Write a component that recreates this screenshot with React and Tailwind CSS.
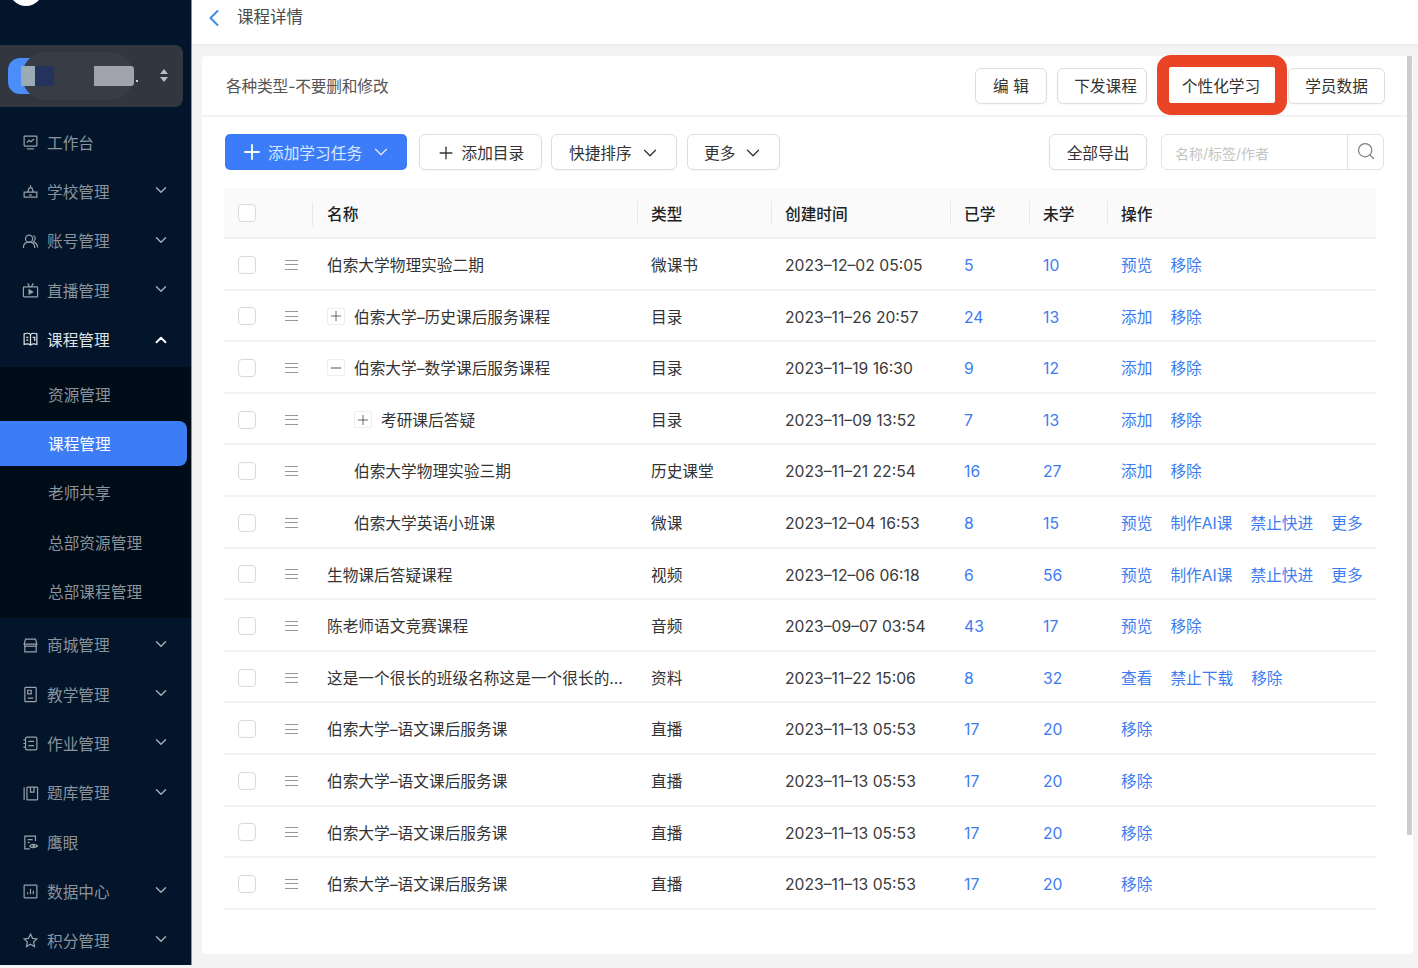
import { ChevronDown, ChevronUp, ChevronLeft, Plus, Minus, Search } from "lucide-react";

// sidebar icons, drawn by hand from the screenshot
const icons = {
  desk: <><rect x="3" y="3" width="18" height="14" rx="1" /><path d="M7 12l3-3 2.500 2L17 7" /><path d="M7 21h10" /></>,
  school: <><path d="M12 3v3" /><path d="M8 13l2-6h4l2 6" /><path d="M3 20v-7h18v7z" /><path d="M10 17h4" /></>,
  user: <><circle cx="10" cy="8" r="5" /><path d="M2 21c0-5 3-8 8-8s8 3 8 8" /><path d="M16 3.500c3 1 4 6 0 9 3 1 6 4 6 8" /></>,
  live: <><rect x="2" y="7" width="20" height="14" rx="1" /><path d="M8 2l3 5M16 2l-3 5" /><path d="M10 11l5 3-5 3z" fill="currentColor" /></>,
  course: <><path d="M12 5c-2-2-6-2-9-1v15c3-1 7-1 9 1 2-2 6-2 9-1V4c-3-1-7-1-9 1z" /><path d="M12 5v15" /><path d="M6 9h3M6 13h3" /><path d="M15 9h3v5" /></>,
  shop: <><path d="M5 3h14l2 7H3z" /><path d="M4 10v11h16V10" /><path d="M3 13h18" /></>,
  teach: <><rect x="4" y="2" width="16" height="20" rx="1" /><path d="M8 6h5v5H8zM8 17h8" /></>,
  work: <><rect x="5" y="3" width="16" height="18" rx="2" /><path d="M9 9h8M9 15h8M2 7h3M2 12h3M2 17h3" /></>,
  bank: <><path d="M3 3v18" /><rect x="7" y="3" width="15" height="18" rx="1" /><path d="M12 3v7h5V3" /></>,
  eye: <><path d="M11 21H4V3h15v7" /><path d="M8 8h7M8 12h3" /><path d="M11 17c2-3 8-3 11 0-3 3-9 3-11 0z" /><circle cx="16.500" cy="17" r="1" /></>,
  data: <><rect x="3" y="3" width="18" height="18" rx="1" /><path d="M8 16v-3M12 16V8M16 16v-5" /></>,
  star: <path d="M12 3l2.800 6 6.200.7-4.600 4.300 1.300 6.500L12 17.200 6.300 20.500l1.300-6.500L3 9.700 9.200 9z" />,
};

function MenuIcon({ name }) {
  return (
    <svg viewBox="0 0 24 24" fill="none" stroke="currentColor" strokeWidth="1.700" className="w-[17px] h-[17px] shrink-0">
      {icons[name]}
    </svg>
  );
}

function MenuRow({ icon, label, arrow, open }) {
  return (
    <div className={`h-[49.3px] flex items-center pl-[21.500px] pr-[21px] ${open ? "text-[#dfe3e7]" : "text-[#9aa1aa]"}`}>
      <MenuIcon name={icon} />
      <span className={`ml-[8.500px] flex-1 pt-[2px] ${open ? "text-[#dfe3e7]" : "text-[#8b939d]"}`}>{label}</span>
      {arrow && (open ? <ChevronUp size={18} strokeWidth={2.400} className="text-white" /> : <ChevronDown size={18} strokeWidth={2} className="text-[#a4abb3] -mt-[3px]" />)}
    </div>
  );
}

function Sidebar() {
  const top = [
    { icon: "desk", label: "工作台" },
    { icon: "school", label: "学校管理", arrow: true },
    { icon: "user", label: "账号管理", arrow: true },
    { icon: "live", label: "直播管理", arrow: true },
    { icon: "course", label: "课程管理", arrow: true, open: true },
  ];
  const sub = ["资源管理", "课程管理", "老师共享", "总部资源管理", "总部课程管理"];
  const bottom = [
    { icon: "shop", label: "商城管理", arrow: true },
    { icon: "teach", label: "教学管理", arrow: true },
    { icon: "work", label: "作业管理", arrow: true },
    { icon: "bank", label: "题库管理", arrow: true },
    { icon: "eye", label: "鹰眼" },
    { icon: "data", label: "数据中心", arrow: true },
    { icon: "star", label: "积分管理", arrow: true },
  ];
  return (
    <div className="w-[192px] h-[965px] shrink-0 bg-[#02152a] border-r border-[#8d939a] overflow-hidden">
      <div className="h-[45px] pl-[9px] overflow-hidden">
        <div className="w-[34px] h-[34px] -mt-[28px] rounded-full bg-white"></div>
      </div>
      <div className="relative h-[62px] w-[183px] rounded-r-[8px] bg-[#31363f] mb-[11px] flex items-center pl-[8px]">
        <div className="w-[40px] h-[36px] rounded-l-[12px] bg-[#4b8dfb]"></div>
        <div className="absolute left-[22px] top-[7px] w-[112px] h-[48px] rounded-full bg-[#383c44]"></div>
        <div className="absolute left-[21px] top-[21px] w-[14px] h-[20px] bg-[#9aabb4]"></div>
        <div className="absolute left-[35px] top-[21px] w-[19px] h-[20px] bg-[#24345f]"></div>
        <div className="absolute left-[94px] top-[21px] w-[40px] h-[20px] rounded-r-[3px] bg-[#a0a3ad]"></div>
        <div className="absolute left-[136px] top-[35px] w-[2px] h-[2px] bg-[#c8ccd2]"></div>
        <div className="absolute left-[160px] top-[24px] flex flex-col gap-[3px]">
          <div className="w-0 h-0 border-x-[4px] border-x-transparent border-b-[5px] border-b-[#b9bdc3]"></div>
          <div className="w-0 h-0 border-x-[4px] border-x-transparent border-t-[5px] border-t-[#b9bdc3]"></div>
        </div>
      </div>
      {top.map((m) => <MenuRow key={m.label} {...m} />)}
      <div className="bg-[#000c17] h-[251px] mt-[2.500px] mb-[2.500px] pt-[3px]">
        {sub.map((s) => (
          <div key={s} className="relative h-[49.3px] flex items-center pl-[48px] text-[#8b939d]">
            {s === "课程管理" && <div className="absolute left-0 top-[2px] w-[187px] h-[45px] rounded-r-[8px] bg-[#3c7df6]"></div>}
            <span className={`relative pt-[2px] ${s === "课程管理" ? "text-white" : ""}`}>{s}</span>
          </div>
        ))}
      </div>
      {bottom.map((m) => <MenuRow key={m.label} {...m} />)}
    </div>
  );
}

function Btn({ children, className = "" }) {
  return (
    <button className={`h-[36px] pt-[3px] rounded-[6px] border border-[#dedede] bg-white text-[#333] flex items-center shadow-[0_1px_2px_rgba(0,0,0,0.04)] ${className}`}>
      {children}
    </button>
  );
}

const rows = [
  { name: "伯索大学物理实验二期", type: "微课书", time: "2023–12–02 05:05", a: 5, b: 10, ops: ["预览", "移除"] },
  { name: "伯索大学–历史课后服务课程", exp: "plus", type: "目录", time: "2023–11–26 20:57", a: 24, b: 13, ops: ["添加", "移除"] },
  { name: "伯索大学–数学课后服务课程", exp: "minus", type: "目录", time: "2023–11–19 16:30", a: 9, b: 12, ops: ["添加", "移除"] },
  { name: "考研课后答疑", exp: "plus", sub: true, type: "目录", time: "2023–11–09 13:52", a: 7, b: 13, ops: ["添加", "移除"] },
  { name: "伯索大学物理实验三期", sub: true, type: "历史课堂", time: "2023–11–21 22:54", a: 16, b: 27, ops: ["添加", "移除"] },
  { name: "伯索大学英语小班课", sub: true, type: "微课", time: "2023–12–04 16:53", a: 8, b: 15, ops: ["预览", "制作AI课", "禁止快进", "更多"] },
  { name: "生物课后答疑课程", type: "视频", time: "2023–12–06 06:18", a: 6, b: 56, ops: ["预览", "制作AI课", "禁止快进", "更多"] },
  { name: "陈老师语文竞赛课程", type: "音频", time: "2023–09–07 03:54", a: 43, b: 17, ops: ["预览", "移除"] },
  { name: "这是一个很长的班级名称这是一个很长的…", type: "资料", time: "2023–11–22 15:06", a: 8, b: 32, ops: ["查看", "禁止下载", "移除"] },
  { name: "伯索大学–语文课后服务课", type: "直播", time: "2023–11–13 05:53", a: 17, b: 20, ops: ["移除"] },
  { name: "伯索大学–语文课后服务课", type: "直播", time: "2023–11–13 05:53", a: 17, b: 20, ops: ["移除"] },
  { name: "伯索大学–语文课后服务课", type: "直播", time: "2023–11–13 05:53", a: 17, b: 20, ops: ["移除"] },
  { name: "伯索大学–语文课后服务课", type: "直播", time: "2023–11–13 05:53", a: 17, b: 20, ops: ["移除"] },
];

const cols = "grid grid-cols-[89px_324px_134px_179px_79px_78px_1fr] items-center";

function Check() {
  return <div className="w-[18px] h-[18px] rounded-[4px] border border-[#d9d9d9] bg-white"></div>;
}

function HeadCell({ children }) {
  return <div className="h-[24px] border-l border-[#e9e9e9] pl-[13px] pt-[5px] flex items-center">{children}</div>;
}

function Row({ row }) {
  return (
    <div className={`${cols} h-[51.6px] pt-[2px] border-b-2 border-[#f3f3f3] text-[#333]`}>
      <div className="flex items-center pl-[14px]">
        <Check />
        <div className="ml-[29px] w-[13px] flex flex-col gap-[3.500px]">
          <div className="h-px bg-[#999]"></div>
          <div className="h-px bg-[#999]"></div>
          <div className="h-px bg-[#999]"></div>
        </div>
      </div>
      <div className={`flex items-center pr-[12px] min-w-0 ${row.sub ? "pl-[41px]" : "pl-[14px]"}`}>
        {row.exp && (
          <div className="w-[18px] h-[17px] mr-[9px] shrink-0 rounded-[2px] border border-[#eeeeee] flex items-center justify-center text-[#444]">
            {row.exp === "plus" ? <Plus size={20} strokeWidth={1.200} /> : <Minus size={20} strokeWidth={1.400} />}
          </div>
        )}
        <span className="pt-[2px] whitespace-nowrap">{row.name}</span>
      </div>
      <div className="pl-[14px] pt-[2px]">{row.type}</div>
      <div className="pl-[14px] pt-[2px] text-[#3a3a3a] whitespace-nowrap">{row.time}</div>
      <div className="pl-[14px] pt-[2px] text-[#3d7cf0]">{row.a}</div>
      <div className="pl-[14px] pt-[2px] text-[#3d7cf0]">{row.b}</div>
      <div className="pl-[14px] pt-[2px] flex gap-[18px] text-[#3d7cf0] whitespace-nowrap">
        {row.ops.map((o) => <span key={o}>{o}</span>)}
      </div>
    </div>
  );
}

export default function App() {
  return (
    <div className="w-[1418px] h-[968px] overflow-hidden bg-[#f4f4f4] flex text-[15.700px] font-['Inter','Noto_Sans_CJK_SC',sans-serif]">
      <Sidebar />
      <div className="flex-1 min-w-0">
        <div className="h-[44px] bg-white pb-[9px] pl-[8px] flex items-center text-[#4a4a4a] shadow-[0_1px_4px_rgba(0,0,0,0.06)]">
          <ChevronLeft size={28} strokeWidth={1.700} className="text-[#3f8ae8]" />
          <span className="ml-[9px] text-[16.500px]">课程详情</span>
        </div>
        <div className="relative mt-[12px] ml-[10px] w-[1211px] h-[898px] bg-white rounded-[4px]">
          <div className="absolute right-[1px] top-0 w-[5px] h-[779px] bg-[#cdcdcd]"></div>
          <div className="h-[61px] border-b-2 border-[#f3f3f3] flex items-center pl-[24px] text-[#555]">
            <span className="mr-auto pt-[2px] tracking-[-0.15px]">各种类型-不要删和修改</span>
            <Btn className="w-[72px] justify-center whitespace-pre">编 辑</Btn>
            <Btn className="w-[90px] ml-[10px] pl-[7px] justify-center">下发课程</Btn>
            <div className="w-[130px] h-[60px] ml-[10px] -mt-[1px] pt-[3px] pr-[2px] rounded-[14px] border-[12px] border-[#e94425] bg-white flex items-center justify-center text-[#333] whitespace-nowrap">个性化学习</div>
            <Btn className="w-[97px] ml-px mr-[28px] justify-center">学员数据</Btn>
          </div>
          <div className="flex items-center mt-[17px] pl-[23px] pr-[29px]">
            <button className="h-[36px] w-[182px] rounded-[5px] bg-[#3d7cf8] text-[#dce8ff] flex items-center pl-[14.500px]">
              <Plus size={24} strokeWidth={1.800} className="text-white" />
              <span className="ml-[4.500px] mr-[8px] pt-[3px]">添加学习任务</span>
              <ChevronDown size={22} strokeWidth={1.400} />
            </button>
            <Btn className="w-[123px] ml-[12px] pl-[16px]">
              <Plus size={20} strokeWidth={1.600} className="-mt-[2px]" />
              <span className="ml-[5.500px]">添加目录</span>
            </Btn>
            <Btn className="w-[126px] ml-[9px] pl-[17px]">
              <span className="mr-[7px]">快捷排序</span>
              <ChevronDown size={22} strokeWidth={1.400} className="-mt-[2px]" />
            </Btn>
            <Btn className="w-[93px] ml-[10px] pl-[16px]">
              <span className="mr-[7px]">更多</span>
              <ChevronDown size={22} strokeWidth={1.400} className="-mt-[2px]" />
            </Btn>
            <Btn className="w-[98px] ml-auto justify-center">全部导出</Btn>
            <div className="w-[223px] h-[36px] ml-[14px] rounded-[6px] border border-[#e2e2e2] flex items-center">
              <span className="flex-1 pl-[13px] pt-[3px] text-[14px] text-[#c4c4c4]">名称/标签/作者</span>
              <div className="w-[36px] h-full border-l border-[#e2e2e2] flex items-center justify-center text-[#7f7f7f]">
                <Search size={20} strokeWidth={1.500} className="-mt-[3px]" />
              </div>
            </div>
          </div>
          <div className="ml-[22px] mt-[18px] w-[1152px]">
            <div className={`${cols} h-[51px] bg-[#fafafa] border-b-2 border-[#f1f1f1] font-medium text-[#222]`}>
              <div className="relative flex items-center pl-[14px] h-full">
                <Check />
                <div className="absolute left-[88px] top-[14px] h-[24px] w-px bg-[#e9e9e9]"></div>
              </div>
              <div className="pl-[14px] pt-[5px]">名称</div>
              <HeadCell>类型</HeadCell>
              <HeadCell>创建时间</HeadCell>
              <HeadCell>已学</HeadCell>
              <HeadCell>未学</HeadCell>
              <HeadCell>操作</HeadCell>
            </div>
            {rows.map((r, i) => <Row key={i} row={r} />)}
          </div>
        </div>
      </div>
    </div>
  );
}
